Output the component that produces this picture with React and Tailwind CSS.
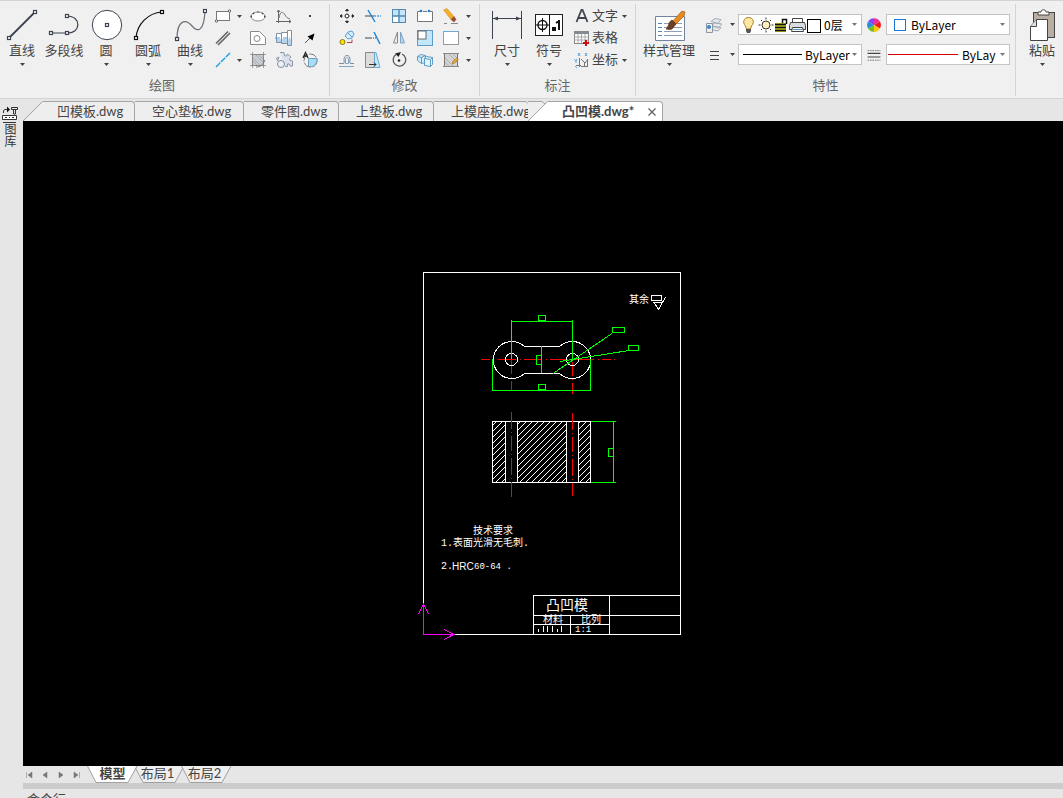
import React, { useState } from 'react';

const Icon = ({ children, className = 'size-5' }) => (
    <svg viewBox="0 0 20 20" className={className} fill="none" stroke="#5a6068" aria-hidden="true">
        {children}
    </svg>
);

const BigIcon = ({ children }) => (
    <svg viewBox="0 0 34 34" className="size-[34px] shrink-0" fill="none" stroke="#3c4250" aria-hidden="true">
        {children}
    </svg>
);

const Arrow = ({ className = 'text-[#444444]' }) => (
    <svg viewBox="0 0 5 3" className={`w-[5px] h-[3px] shrink-0 ${className}`} aria-hidden="true">
        <path d="M0 0h5L2.5 3z" fill="currentColor" />
    </svg>
);

// Square grip drawn on the end points of the big icons
const Grip = ({ x, y }) => <rect x={x - 1.5} y={y - 1.5} width="3" height="3" fill="#fff" strokeWidth="1.2" />;

const drawTools = [
    {
        label: '直线',
        menu: true,
        icon: (
            <>
                <path d="M4 30L30 4" strokeWidth="1.8" />
                <Grip x={4} y={30} />
                <Grip x={30} y={4} />
            </>
        ),
    },
    {
        label: '多段线',
        menu: false,
        icon: (
            <>
                <path d="M4 25H20C34 26 35 8 20 8" strokeWidth="1.2" />
                <Grip x={20} y={8} />
                <Grip x={4} y={25} />
                <Grip x={20} y={25} />
            </>
        ),
    },
    {
        label: '圆',
        menu: true,
        icon: (
            <>
                <circle cx="18" cy="17" r="14.7" fill="#fff" />
                <Grip x={18} y={17} />
            </>
        ),
    },
    {
        label: '圆弧',
        menu: true,
        icon: (
            <g stroke="#111">
                <path d="M5 30C6 16 17 5 31 4" strokeWidth="1.2" />
                <Grip x={5} y={30} />
                <Grip x={31} y={4} />
            </g>
        ),
    },
    {
        label: '曲线',
        menu: true,
        icon: (
            <>
                <path d="M4 31C4 11 13 11 19 18S31 23 32 3" stroke="#6b6f76" strokeWidth="1.2" />
                <Grip x={4} y={31} />
                <Grip x={32} y={3} />
            </>
        ),
    },
];

const smallDraw = [
    {
        name: '矩形',
        menu: true,
        icon: (
            <>
                <rect x="3.5" y="5.5" width="13" height="9" fill="#fff" stroke="#777" />
                <circle cx="16.5" cy="5" r="1.2" fill="#fff" />
                <circle cx="3.5" cy="15" r="1.2" fill="#fff" />
            </>
        ),
    },
    {
        name: '椭圆',
        icon: (
            <>
                <ellipse cx="10" cy="10.5" rx="7" ry="4.5" fill="#fff" stroke="#888" />
                <path d="M2.500 10.5h1.500M16 10.5h1.500M9.500 6h1M5 7l1 1M15 7l-1 1" stroke="#444" strokeWidth="1.5" />
            </>
        ),
    },
    {
        name: '样条',
        icon: (
            <>
                <path d="M4.5 4v13M2 15.5h15M3 6l1.5-2L6 6M15 14l2 1.5-2 1.5" stroke="#666" />
                <path d="M5 12C6 5 9 5 11 9c1 2 2 3 5 4" stroke="#777" />
            </>
        ),
    },
    { name: '点', icon: <rect x="9" y="9" width="2" height="2" fill="#444" stroke="none" /> },
    {
        name: '双线',
        icon: <path d="M3 15.500L15 3.500M5 17L17 5" stroke="#666" strokeWidth="1.600" />,
    },
    {
        name: '面域',
        icon: (
            <>
                <path d="M2.5 3.5h9l6 6v7h-15z" fill="#fff" stroke="#888" />
                <circle cx="9" cy="10.5" r="3" stroke="#888" />
            </>
        ),
    },
    {
        name: '轴',
        icon: (
            <>
                <path d="M2.5 5.5h5v9h-5zM7.5 4.5h6v11h-6zM13.5 2.5h4v15h-4z" fill="#fff" stroke="#8090a2" />
                <path d="M3 11h4v3H3zM8 11h5v4H8zM14 11h3v6h-3z" fill="#b9d5ec" stroke="none" />
                <path d="M1 10h17" stroke="#4a9be0" strokeDasharray="5 1 1 1" />
            </>
        ),
    },
    {
        name: '箭头',
        icon: (
            <>
                <path d="M5 15l6-6" stroke="#555" />
                <path d="M14.500 5.500l-2 7-5-4z" fill="#000" stroke="none" />
            </>
        ),
    },
    { name: '构造线', menu: true, icon: <path d="M3 17L17 3" stroke="#1ba1e2" strokeWidth="1.4" strokeDasharray="6 1" /> },
    {
        name: '填充',
        icon: (
            <>
                <rect x="4.500" y="4.500" width="11" height="11" fill="#c9ccd2" stroke="#888" />
                <path d="M5 8l7 7M5 11l4 4M8 5l7 7M11 5l4 4" stroke="#a9adb4" />
                <path d="M4.500 2v16M15.500 2v16M2 4.500h16M2 15.500h16" stroke="#888" strokeWidth=".8" />
                <path d="M17 10c-2 5-5 7-9 7" stroke="#777" />
            </>
        ),
    },
    {
        name: '图块',
        icon: (
            <>
                <path
                    d="M6 2.500h4l.5 3 2 .5 1-2 3.500 3-1.500 1.500.5 2 2.500.5v5h-2.500l-.5-2h-2v2.500h-2.500M3.500 11l-1-3 2.500-1z"
                    fill="#dbe1ec"
                    stroke="#8c97ab"
                />
                <circle cx="7" cy="14" r="3.500" fill="#f0f0f0" stroke="#7c8aa5" />
            </>
        ),
    },
    {
        name: '图幅',
        icon: (
            <>
                <circle cx="10.500" cy="10.500" r="6.500" fill="#f4f4f4" stroke="#777" strokeDasharray="8 1.500" />
                <path d="M8.500 8.500h8.500c0 6-3 9-8.500 8z" fill="#a8ddf6" stroke="#6b9db9" />
                <path d="M3 8L5.500 2.500 8 8M4 6h3" stroke="#222" strokeWidth="1.300" />
            </>
        ),
    },
];

const smallModify = [
    [
        '移动',
        <>
            <path d="M8.500 4.500L10 3l1.500 1.500zM8.500 15.500L10 17l1.500-1.500zM4.500 8.500L3 10l1.500 1.500zM15.500 8.500L17 10l-1.500 1.500z" fill="#333" stroke="#333" />
            <rect x="8.500" y="8.500" width="3" height="3" fill="#fff" />
            <path d="M10 5v3M10 12v3M5 10h3M12 10h3" strokeDasharray="1 1" />
        </>,
    ],
    [
        '修剪',
        <>
            <path d="M2 10h9" stroke="#444" />
            <path d="M11 10h7" stroke="#1d7fd6" strokeDasharray="2 1" />
            <path d="M5 4l7 12" stroke="#1d7fd6" strokeWidth="1.400" />
        </>,
    ],
    [
        '阵列',
        <>
            <rect x="3.500" y="3.500" width="13" height="13" fill="#c2e6fb" stroke="#5687ae" />
            <path d="M4 10.500h5.500V16H4z" fill="#fff" stroke="none" />
            <path d="M10 3.500v13M3.500 10h13" stroke="#5687ae" strokeWidth="1.400" />
        </>,
    ],
    [
        '打断',
        <>
            <path d="M6 5.500H2.500v10h15v-10H14M8 5.500h4" fill="#fff" stroke="#777" />
            <circle cx="6" cy="5" r="1.300" fill="#1d7fd6" stroke="none" />
            <circle cx="14" cy="5" r="1.300" fill="#1d7fd6" stroke="none" />
        </>,
    ],
    [
        '删除',
        <>
            <path d="M2.500 4l3.500-1.500 7 8-3 3z" fill="#f4ae2c" stroke="#d08a16" strokeWidth=".5" />
            <path d="M10 13.500l3-3 2 3-2 2.500z" fill="#a44c36" stroke="#7b3c2c" strokeWidth=".5" />
            <path d="M3 17.500h3M10 17.500h7" stroke="#888" />
        </>,
    ],
    [
        '复制',
        <>
            <path d="M8 8l3-4 4-1 2 3-2 4-4 1z" fill="#d4ecfb" stroke="#56a0d8" />
            <path d="M11 5l4 4" stroke="#56a0d8" />
            <circle cx="5.500" cy="14" r="2.500" fill="#ffe500" stroke="#8a7c12" />
            <path d="M10 14.500h5v-3" stroke="#b84040" />
        </>,
    ],
    [
        '延伸',
        <>
            <path d="M2 10h6" stroke="#444" />
            <path d="M8 10h5" stroke="#444" strokeDasharray="1 1" />
            <path d="M11 4l6 12" stroke="#1d7fd6" strokeWidth="1.400" />
        </>,
    ],
    [
        '镜像',
        <>
            <path d="M8.500 4v11h-4z" fill="#eee" stroke="#888" />
            <path d="M11.500 4v11h4z" fill="#b9d7ee" stroke="#7ea3c3" />
        </>,
    ],
    [
        '缩放',
        <>
            <rect x="2.500" y="2.500" width="15" height="15" fill="#c2e6fb" stroke="#5f9cc8" />
            <rect x="3" y="3" width="8" height="8" fill="#fff" stroke="#666" />
        </>,
    ],
    [
        '分解',
        <>
            <rect x="2.500" y="3.500" width="15" height="13" fill="#fff" stroke="#999" />
            <path d="M2.500 16V3.500h15" stroke="#58b2ec" strokeDasharray="2 1" />
        </>,
    ],
    [
        '偏移',
        <>
            <path d="M2 13.500h4c2 0 1-2 1-4s1-4 3-4 3 2 3 4-1 4 1 4h3" stroke="#7c8a98" />
            <path d="M2 16.500h15M8.500 13.500V9c0-2 3-2 3 0v4.500z" stroke="#7fa5c8" />
        </>,
    ],
    [
        '拉伸',
        <>
            <path d="M2.500 2.500h9v15h-9z" fill="#dcdcdc" stroke="#888" />
            <path d="M11.500 2.500h1.500l4 15h-5.500z" fill="#c5e8fb" stroke="#6fa9d2" />
            <path d="M6 14.500h7M11 12.500l2 2-2 2" stroke="#333" />
        </>,
    ],
    [
        '旋转',
        <>
            <path d="M7 4.500a6.300 6.300 0 1 0 6-.5" stroke="#555" strokeWidth="1.300" />
            <path d="M6 3.500l6-1.500-2.500 5z" fill="#222" stroke="none" />
            <circle cx="10" cy="10.500" r="1.300" fill="#222" stroke="none" />
        </>,
    ],
    [
        '三维阵列',
        <>
            <path d="M2.500 6.500l3-2 5 1v7l-4 1-4-3zM2.500 6.500l4 1v6M6.500 7.500l4-2" fill="#d4edfa" stroke="#5d9cc5" />
            <path d="M9.500 8.500l2-2 6 1v7l-2 2-6-1zM9.500 8.500l6 1v7M15.500 9.500l2-2" fill="#e3f4fd" stroke="#5d9cc5" />
        </>,
    ],
    [
        '编辑填充',
        <>
            <rect x="3.500" y="3.500" width="13" height="13" fill="#d4d4d4" stroke="#777" />
            <path d="M4 8l8 8M4 12l4 4M8 4l8 8M12 4l4 4" stroke="#b0b0b0" />
            <path d="M2 3.500h16M2 16.500h16" stroke="#888" />
            <path d="M11 14l1-3 4-3 1.500 1.500-4 3.500z" fill="#e8a83c" stroke="#a56b18" strokeWidth=".6" />
        </>,
    ],
];

const RibbonGroup = ({ title, className, children }) => (
    <section className={`h-[92px] shrink-0 flex flex-col border-r border-[#d4d4d4] ${className}`}>
        <div className="flex h-[71px]">{children}</div>
        <h2 className="text-[13px] leading-5 text-center text-[#666666] whitespace-nowrap">{title}</h2>
    </section>
);

const BigButton = ({ label, menu = true, className = 'w-[42px]', children }) => (
    <button type="button" className={`flex flex-col items-center shrink-0 pt-1 hover:bg-white/60 ${className}`}>
        <BigIcon>{children}</BigIcon>
        <span className="text-[13px] leading-4 whitespace-nowrap">{label}</span>
        <span className="h-[13px] flex items-center">{menu && <Arrow />}</span>
    </button>
);

const TextTool = ({ label, menu, children }) => (
    <button type="button" className="flex items-center h-[22px] hover:bg-white/60">
        <Icon>{children}</Icon>
        <span className="text-[13px] leading-5 whitespace-nowrap mr-1 pb-0.5">{label}</span>
        {menu && <Arrow />}
    </button>
);

const Combo = ({ label, value, className = '', children }) => (
    <div className="w-[124px] h-[21px] shrink-0 flex items-center pr-1 bg-white border border-[#c4c4c4]">
        {children}
        <select
            aria-label={label}
            defaultValue={value}
            className={`appearance-none bg-transparent flex-1 min-w-0 h-full text-xs leading-[18px] text-black outline-none ${className}`}
        >
            <option>{value}</option>
        </select>
        <Arrow className="text-[#777777]" />
    </div>
);

const Ribbon = () => (
    <header className="h-[99px] shrink-0 flex pt-[3px] overflow-hidden bg-[#f0f0f0] border-t border-b border-[#d4d4d4] text-[#444444]">
        <RibbonGroup title="绘图" className="w-[330px] pl-px pr-1.5">
            {drawTools.map((tool) => (
                <BigButton key={tool.label} label={tool.label} menu={tool.menu}>
                    {tool.icon}
                </BigButton>
            ))}
            <div className="grid grid-cols-[33px_26px_26px_26px] auto-rows-[22px] pt-px ml-px shrink-0">
                {smallDraw.map((tool, i) => (
                    <button
                        key={tool.name}
                        type="button"
                        aria-label={tool.name}
                        className={`flex items-center hover:bg-white/60 ${i % 4 ? 'justify-center' : 'gap-1 pl-px'}`}
                    >
                        <Icon>{tool.icon}</Icon>
                        {tool.menu && <Arrow />}
                    </button>
                ))}
            </div>
        </RibbonGroup>

        <RibbonGroup title="修改" className="w-[150px] px-1">
            <div className="grid grid-cols-[26px_26px_26px_26px_35px] auto-rows-[22px] pt-px">
                {smallModify.map(([name, icon], i) => (
                    <button
                        key={name}
                        type="button"
                        aria-label={name}
                        className={`flex items-center hover:bg-white/60 ${i % 5 === 4 ? 'gap-[5px] pl-[3px]' : 'justify-center'}`}
                    >
                        <Icon>{icon}</Icon>
                        {i % 5 === 4 && <Arrow />}
                    </button>
                ))}
            </div>
        </RibbonGroup>

        <RibbonGroup title="标注" className="w-[156px] px-1.5">
            <BigButton label="尺寸">
                <path d="M2.500 3v28M31.500 3v28M3 10.500h28" />
                <path d="M3 10.500l5-2v4zM31 10.500l-5-2v4z" fill="#3c4250" stroke="none" />
            </BigButton>
            <BigButton label="符号">
                <rect x="3.500" y="6.500" width="27" height="21" fill="#fff" stroke="#222" />
                <path d="M17.500 7v20M4 17h13M10.500 10v14" stroke="#111" />
                <circle cx="10.500" cy="17" r="4.500" stroke="#111" strokeWidth="1.400" />
                <path d="M21 20h2v2h-2zM27 12v10M27 13l-3 2" stroke="#111" strokeWidth="2" />
            </BigButton>
            <div className="flex flex-col items-start pt-px ml-0.5 shrink-0">
                <TextTool label="文字" menu>
                    <path d="M4.500 16L9.500 4h1l5 12M6.500 12h7" stroke="#3f4550" strokeWidth="1.800" />
                </TextTool>
                <TextTool label="表格">
                    <rect x="2.500" y="3.500" width="14" height="12" fill="#fff" stroke="#888" />
                    <path d="M2 3h15v3H2z" fill="#858990" stroke="none" />
                    <path d="M2.500 9h14M2.500 12h14M6 6v9M9.500 6v9M13 6v9" stroke="#aaa" />
                    <path d="M14 12v6M11 15h6" stroke="#d01010" strokeWidth="2" />
                </TextTool>
                <TextTool label="坐标" menu>
                    <path d="M7.500 8v9M4 15.500h5M9 9l4 4 3-4M12.500 12v5M15.500 9v8M9 16.500h7" stroke="#777" />
                    <path d="M6 3l2 3M8 3L6 6M13 3l2 3M15 3l-2 3M2 9l2 2 1-2M4 11v2M3 16l2 2" stroke="#5ba6de" />
                </TextTool>
            </div>
        </RibbonGroup>

        <RibbonGroup title="特性" className="w-[380px] px-1.5">
            <BigButton label="样式管理" className="w-[54px]">
                <path d="M3.500 8.500h29v24h-29z" fill="#fff" stroke="#71859a" />
                <path d="M6 15.500h4M6 19.500h4M6 23.500h4M6 27.500h4" stroke="#4388c4" />
                <path d="M12 15.500h18M12 19.500h18M12 23.500h18M12 27.500h18" stroke="#8d9fb5" />
                <path d="M20 14L30 3l3 1-1 4-9 9z" fill="#e58b1f" stroke="#a45b12" strokeWidth=".7" />
                <path d="M20 12l4 4-4 5c-2 1-4 0-6 0 3-2 2-7 6-9z" fill="#6c4022" stroke="#4e2d17" strokeWidth=".7" />
            </BigButton>
            <div className="flex flex-col gap-[9px] pt-2.5 ml-2 shrink-0">
                <div className="flex items-center h-[21px]">
                    <button type="button" aria-label="图层" className="flex items-center gap-[6px] w-[34px] shrink-0">
                        <Icon>
                            <path d="M7 6.500l4-3 6 1-3 4zM7 10l4-2 7 1-4 4zM7 12.500l4-1 6 1-3 3.500-5-1z" fill="#e4e8ec" stroke="#a5adb7" />
                            <path d="M2.500 8.500h6v9h-6z" fill="#eee" stroke="#8b95a2" />
                            <circle cx="5" cy="12" r="2" fill="#3b87c8" stroke="none" />
                        </Icon>
                        <Arrow />
                    </button>
                    <Combo label="当前图层" value="0层" className="pl-px">
                        <svg viewBox="0 0 84 19" className="w-[84px] h-[19px] shrink-0" fill="none" aria-hidden="true">
                            <path d="M6.500 11C3 7 5 2.500 9.500 2.500s6.500 4.500 3 8.500l-1 3h-4z" fill="#ffe9a0" stroke="#a77b31" />
                            <path d="M7 14h5v2l-1 2H8l-1-2z" fill="#555" />
                            <circle cx="27" cy="10" r="4" fill="#ffefbd" stroke="#333" />
                            <path d="M27 2.500v2M27 15.500v2M19.500 10h2M32.500 10h2M22 5l1 1M31 14l1 1M32 5l-1 1M23 14l-1 1" stroke="#333" />
                            <path d="M36 8h11v9H36z" fill="#b7ba20" />
                            <path d="M36 9.500h11M36 12.500h11M36 15.500h11M43.500 8V4.500h4V9" stroke="#111" strokeWidth="1.500" />
                            <path d="M53.500 7V3.500h10V7" fill="#fff" stroke="#444" />
                            <path d="M51.500 7.500h14l1 3v4h-16v-4z" fill="#d9dde1" stroke="#444" />
                            <path d="M53.500 12.500h10l1 4h-12z" fill="#fff" stroke="#444" />
                            <path d="M54 14.500h9" stroke="#4b91cd" />
                            <rect x="68.500" y="4.500" width="13" height="13" fill="#fff" stroke="#000" />
                        </svg>
                    </Combo>
                    <span className="w-6 flex justify-center">
                        <Icon className="size-4">
                            <g stroke="none">
                                <path d="M10 10V1.500A8.500 8.500 0 0 1 17.400 5.700z" fill="#e8319a" />
                                <path d="M10 10l7.400-4.300a8.500 8.500 0 0 1 0 8.600z" fill="#f01c1c" />
                                <path d="M10 10l7.400 4.300A8.500 8.500 0 0 1 10 18.500z" fill="#ffc40c" />
                                <path d="M10 10v8.500a8.500 8.500 0 0 1-7.400-4.200z" fill="#72c11f" />
                                <path d="M10 10l-7.400 4.300a8.500 8.500 0 0 1 0-8.600z" fill="#2490dc" />
                                <path d="M10 10L2.600 5.700A8.500 8.500 0 0 1 10 1.500z" fill="#8b44f0" />
                            </g>
                        </Icon>
                    </span>
                    <Combo label="颜色" value="ByLayer" className="pl-[5px]">
                        <span className="ml-[7px] size-3 shrink-0 border border-[#1976d2] bg-white"></span>
                    </Combo>
                </div>
                <div className="flex items-center h-[21px]">
                    <button type="button" aria-label="线宽" className="flex items-center gap-[6px] w-[34px] shrink-0">
                        <Icon>
                            <path d="M6 6.500h9M6 10.500h9M6 14.500h9" stroke="#444" />
                        </Icon>
                        <Arrow />
                    </button>
                    <Combo label="线型" value="ByLayer" className="pl-[3px]">
                        <span className="ml-1 w-[59px] h-px shrink-0 bg-black"></span>
                    </Combo>
                    <span className="w-6 flex justify-center">
                        <Icon className="size-4">
                            <path d="M2 4.500h16M2 16.500h16" strokeDasharray="2 1" />
                            <path d="M2 8h16M2 12.500h16" stroke="#444" strokeWidth="1.500" />
                        </Icon>
                    </span>
                    <Combo label="线宽样式" value="ByLayer" className="pl-1 mr-1">
                        <span className="ml-px w-[70px] h-px shrink-0 bg-[#dd0000]"></span>
                    </Combo>
                </div>
            </div>
        </RibbonGroup>

        <RibbonGroup title="剪贴板" className="w-[132px] pl-[5px]">
            <BigButton label="粘贴">
                <rect x="8.500" y="4.500" width="21" height="25" fill="#b8aea3" stroke="#444" />
                <path d="M13 6V4h3c0-3 5-3 5 0h3v3H13z" fill="#fff" stroke="#444" />
                <path d="M5.500 18.500l6-7h11v21h-17z" fill="#fff" stroke="#444" />
                <path d="M5.500 18.500h6v-7" fill="#ddd" stroke="#444" />
            </BigButton>
        </RibbonGroup>
    </header>
);

const files = [
    { name: '凹模板.dwg', className: 'w-[92px] pl-3.5 border-r' },
    { name: '空心垫板.dwg', className: 'w-[109px] pl-[17px] border-r' },
    { name: '零件图.dwg', className: 'w-[95px] pl-[17px] border-r' },
    { name: '上垫板.dwg', className: 'w-[95px] pl-[17px] border-r' },
    { name: '上模座板.dwg', className: 'w-[94px] pl-[17px]' },
];

const Slant = ({ fill, behind = 'none' }) => (
    <svg viewBox="0 0 20 20" className="size-5 shrink-0" aria-hidden="true">
        {behind !== 'none' && <path d="M0 .5H14L18 2.500V20H0z" fill={behind} />}
        {behind !== 'none' && <path d="M0 .5H14L17 3" fill="none" stroke="#a4a4a4" />}
        <path d="M0 20L19.500 .5H20V20z" fill={fill} />
        <path d="M0 20L19.500 .5H20" fill="none" stroke="#a4a4a4" />
    </svg>
);

const FileTabs = () => (
    <nav
        aria-label="图纸"
        className="h-[22px] shrink-0 flex items-end overflow-hidden text-[13px] leading-4 text-[#444444] font-[Lato,'Noto_Sans_CJK_SC',sans-serif]"
    >
        <Slant fill="#eeeeee" />
        {files.map((file) => (
            <button
                key={file.name}
                type="button"
                className={`h-5 shrink-0 flex items-center pb-0.5 text-left whitespace-nowrap rounded-tr-sm bg-[#eeeeee] border-t border-[#a4a4a4] ${file.className}`}
            >
                {file.name}
            </button>
        ))}
        <Slant fill="#ffffff" behind="#eeeeee" />
        <div className="h-5 w-[115px] shrink-0 flex items-center justify-between pl-3.5 pr-1.5 rounded-tr-sm bg-white border-t border-r border-[#a4a4a4]">
            <button type="button" className="font-bold whitespace-nowrap pb-0.5" aria-current="page">
                凸凹模.dwg*
            </button>
            <button type="button" aria-label="关闭">
                <svg viewBox="0 0 8 8" className="size-2" aria-hidden="true">
                    <path d="M.5 .5l7 7M7.500 .5l-7 7" stroke="#666" strokeWidth="1.400" />
                </svg>
            </button>
        </div>
    </nav>
);

// Model space, in screen units with the origin at the top left of the window
const Drawing = () => (
    <svg
        viewBox="23 121 1040 645"
        className="w-full h-full font-['Liberation_Mono','Noto_Sans_CJK_SC',monospace]"
        fill="none"
        stroke="#fff"
        shapeRendering="crispEdges"
        role="img"
        aria-label="凸凹模"
    >
        <defs>
            <pattern id="hatch" width="6" height="6" patternUnits="userSpaceOnUse">
                <path d="M-1 7L7 -1M-1 1L1 -1M5 7L7 5" stroke="#fff" strokeWidth="1" />
            </pattern>
        </defs>

        {/* Sheet and title block */}
        <rect x="423.5" y="272.5" width="257" height="362" />
        <path d="M533.5 634.500V595.500H680M533.500 615.500H680M609.500 595.500V634M533.500 624.500H609.500M570.500 615.500V634" />

        {/* Surface finish mark */}
        <path d="M651.500 295.500h10v5h-10zM654 302.500h8.500l-4 7zM658.500 309.500L665.500 297" />

        {/* Section view */}
        <g fill="url(#hatch)">
            <rect x="492.500" y="421.500" width="13" height="61" />
            <rect x="517.500" y="421.500" width="49" height="61" />
            <rect x="578.500" y="421.500" width="12" height="61" />
        </g>
        <path d="M492.500 421.500h98M492.500 482.500h98" />

        {/* Centre lines */}
        <g stroke="#f00">
            <path d="M481 359.500H617" strokeDasharray="9 3 1 4 18 4 1 3 18 4 1 3 18 4 1 3 18 4 1 3" />
            <path d="M511.500 360V391M572.500 362V394" strokeDasharray="14 3 1 3" />
            <path d="M511.500 412V497M572.500 413V496" strokeDasharray="17 3 1 3 15 3 1 3" />
        </g>

        {/* Plan view */}
        <path d="M524.500 346.500H559.500A18.500 18.500 0 1 1 559.500 373.500H524.500A18.500 18.500 0 1 1 524.500 346.500z" />
        <circle cx="511.500" cy="359.500" r="6" />
        <circle cx="572.500" cy="359.500" r="6" />

        {/* Dimensions */}
        <g stroke="#0f0">
            <path d="M511.500 359V320M572.500 359V320M512 321.500h61" />
            <path d="M538.500 315.500h7v5h-7zM538.500 384.500h7v5h-7zM536.500 355.500h5v9h-5z" />
            <path d="M541.500 346V373M492.500 359V391M590.500 359V391M492.500 390.500h98" />
            <path d="M553 373.500L612 333.500M560 361.500L629 350.500" />
            <path d="M612.500 327.500h12v5h-12zM628.500 345.500h10v5h-10z" />
            <path d="M591 421.500h25M591 482.500h25M613.500 421.500v61M608.500 448.500h5v8h-5z" />
        </g>

        {/* UCS marker */}
        <path d="M418.500 614L423.500 604.500 428.500 614M423.500 604V634.500H453M444 629.500L453.500 634.500 444 639.500" stroke="#f0f" />

        {/* Clipped material code */}
        <path d="M538.500 629v3M543.500 626v6M547.500 626v6M552.500 626v6M557.500 629v3M561.500 626v6" />

        <g fill="#fff" stroke="none" fontSize="10">
            <text x="629" y="303">其余</text>
            <text x="473" y="534">技术要求</text>
            <text x="441" y="546">1.</text>
            <text x="453" y="546">表面光滑无毛刺.</text>
            <text x="441" y="569">2.</text>
            <text x="452" y="570" className="font-['Liberation_Sans',sans-serif]">HRC</text>
            <text x="474" y="569" fontSize="9">60-64 .</text>
            <text x="546" y="610" fontSize="14">凸凹模</text>
            <text x="543" y="623">材料</text>
            <text x="581" y="623">比列</text>
            <text x="575" y="632" fontSize="9">1:1</text>
        </g>
    </svg>
);

const navButtons = [
    { name: '第一个', d: 'M1.500 1v6M7 1v6L3 4z' },
    { name: '上一个', d: 'M6 1v6L2 4z' },
    { name: '下一个', d: 'M2 1v6L6 4z' },
    { name: '最后一个', d: 'M1 1v6L5 4zM6.500 1v6' },
];

const SheetTabs = ({ active, onSelect }) => (
    <nav
        aria-label="布局"
        className="h-[17px] shrink-0 flex overflow-hidden text-[13px] text-[#444444] font-[Lato,'Noto_Sans_CJK_SC',sans-serif]"
    >
        <div className="flex items-center gap-2 pl-0.5 w-16 shrink-0">
            {navButtons.map((btn) => (
                <button key={btn.name} type="button" aria-label={btn.name}>
                    <svg viewBox="0 0 8 8" className="size-2" aria-hidden="true">
                        <path d={btn.d} fill="#777" stroke="#777" strokeWidth=".5" />
                    </svg>
                </button>
            ))}
        </div>
        {['模型', '布局1', '布局2'].map((name) => (
            <button
                key={name}
                type="button"
                onClick={() => onSelect(name)}
                className={`relative w-[51px] -mr-1 h-[17px] shrink-0 ${active === name ? 'z-10 font-bold' : 'pr-1'}`}
            >
                <svg viewBox="0 0 51 17" className="absolute inset-0 w-full h-full" aria-hidden="true">
                    <path
                        d="M.5 0L9 16.500H41L50 0"
                        fill={active === name ? '#ffffff' : '#eeeeee'}
                        stroke="#a0a0a0"
                    />
                </svg>
                <span className="relative block leading-[14px] pb-[3px] whitespace-nowrap">{name}</span>
            </button>
        ))}
    </nav>
);

const App = () => {
    const [sheet, setSheet] = useState('模型');

    return (
        <div className="h-screen flex flex-col overflow-hidden bg-[#e6e6e6] font-['Noto_Sans_CJK_SC',sans-serif]">
            <Ribbon />
            <div className="flex flex-1 min-h-0">
                <aside className="w-[23px] shrink-0 pt-1.5">
                    <button type="button" className="flex flex-col items-center w-5 text-[#333333]">
                        <svg viewBox="0 0 18 18" className="size-[18px]" fill="none" stroke="#333" aria-hidden="true">
                            <path d="M2.500 8V5.500L4 4.500h3" />
                            <path d="M6 1.500l3 3-3 3z" fill="#111" stroke="none" />
                            <path d="M10.500 2.500h6v2h-6zM12.500 5v4h2V5" />
                            <path d="M1.500 10.500h14v4h-14z" fill="#fff" />
                            <path d="M4 12.500h2M8 12.500h1M11 12.500h2M2 17.500h13" />
                        </svg>
                        <span className="text-xs leading-[14px] [writing-mode:vertical-rl] [text-orientation:upright]">图库</span>
                    </button>
                </aside>
                <div className="flex flex-col flex-1 min-w-0">
                    <FileTabs />
                    <main className="flex-1 min-h-0 bg-black">
                        <Drawing />
                    </main>
                    <SheetTabs active={sheet} onSelect={setSheet} />
                    <div className="h-1.5 shrink-0 bg-[#cccccc]"></div>
                    <footer className="h-[9px] shrink-0 overflow-hidden pl-1 pt-0.5 text-[13px] leading-4 text-[#444444]">
                        命令行
                    </footer>
                </div>
            </div>
        </div>
    );
};

export default App;
